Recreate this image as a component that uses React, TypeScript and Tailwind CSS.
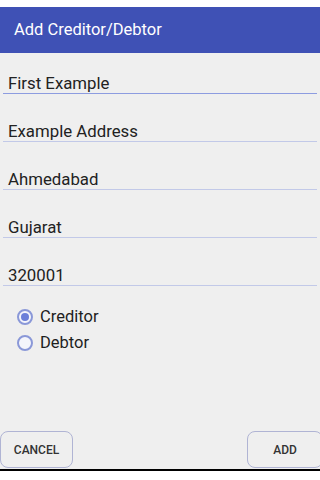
import React from 'react';

const FIELDS = ['First Example', 'Example Address', 'Ahmedabad', 'Gujarat', '320001'];

function Field({ value, first }: { value: string; first?: boolean }) {
  return (
    <div
      className={`mx-[3px] pl-[5px] border-b ${first ? 'mt-[20px] border-[#8d9ce0]' : 'mt-[27px] border-[#c2c9e8]'}`}
    >
      <div className="text-[16.8px] leading-[20px] text-[#222]">{value}</div>
    </div>
  );
}

function Radio({ label, checked }: { label: string; checked?: boolean }) {
  return (
    <div className="flex items-center h-[26px] gap-[7px]">
      <span className="w-[16px] h-[16px] rounded-full border-2 border-[#8a98d8] bg-[#f4f5fb] flex items-center justify-center">
        {checked && <span className="w-[8px] h-[8px] rounded-full bg-[#6b7fd9]" />}
      </span>
      <span className="text-[16.5px] text-[#1e1e1e]">{label}</span>
    </div>
  );
}

export default function App() {
  return (
    <div className="w-[320px] h-[480px] bg-white flex flex-col overflow-hidden" style={{ fontFamily: 'Roboto, "Noto Sans", sans-serif' }}>
      <div className="h-[7px] bg-white" />
      <div className="h-[46px] bg-[#3f51b5] flex items-center pl-[14px]">
        <span className="text-white text-[16.5px]">Add Creditor/Debtor</span>
      </div>
      <div className="h-[416px] bg-[#efefef] flex flex-col">
        {FIELDS.map((v, i) => (
          <Field key={v} value={v} first={i === 0} />
        ))}
        <div className="mt-[18px] pl-[17px] flex flex-col">
          <Radio label="Creditor" checked />
          <Radio label="Debtor" />
        </div>
        <div className="mt-auto flex justify-between pb-[1px]">
          <button className="w-[73px] h-[37px] rounded-[8px] border border-[#b0b4d4] text-[12px] font-medium text-[#333]">
            CANCEL
          </button>
          <button className="w-[76px] h-[37px] rounded-[8px] border border-[#b0b4d4] text-[12px] font-medium text-[#333] -mr-[3px]">
            ADD
          </button>
        </div>
      </div>
      <div className="h-[2px] bg-black" />
      <div className="flex-1 bg-white" />
    </div>
  );
}
